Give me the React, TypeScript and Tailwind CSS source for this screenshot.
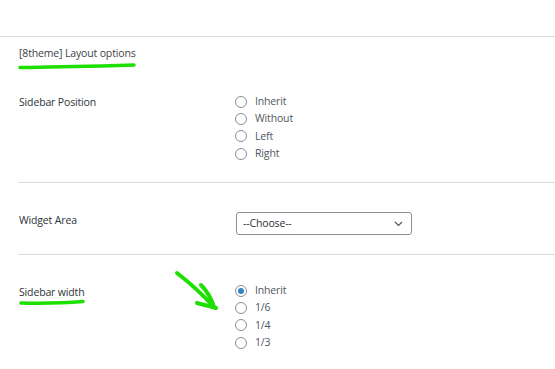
import React from 'react';

const font = { fontFamily: '"Open Sans", "Noto Sans", Arial, sans-serif' };

function Radio({ label, checked = false }: { label: string; checked?: boolean }) {
  return (
    <label className="flex items-center h-[17.33px] gap-[8px]">
      <span className="w-[12px] h-[12px] rounded-full border border-[#8c8f94] bg-white flex items-center justify-center shrink-0">
        {checked && <span className="w-[6px] h-[6px] rounded-full bg-[#3582c4]" />}
      </span>
      <span className="text-[10.5px] tracking-[-0.15px] leading-[17px] text-[#50575e]">{label}</span>
    </label>
  );
}

function RadioGroup({ options, checked }: { options: string[]; checked?: string }) {
  return (
    <div className="flex flex-col">
      {options.map((o) => (
        <Radio key={o} label={o} checked={o === checked} />
      ))}
    </div>
  );
}

export default function App() {
  return (
    <div className="relative w-[555px] h-[369px] bg-white overflow-hidden text-[#1d2327]" style={font}>
      {/* top strip */}
      <div className="h-[37px] border-b border-[#dcdcde]" />

      {/* section heading */}
      <div className="relative pl-[19px] pt-[8px]">
        <h3 className="text-[10.5px] tracking-[-0.15px] leading-[16px] text-[#3c434a] font-normal">[8theme] Layout options</h3>
      </div>

      <div className="ml-[18px]">
        {/* Sidebar position */}
        <div className="flex h-[121px] pt-[32px]">
          <div className="w-[217px] pl-[1px] pt-[1px] text-[10.5px] tracking-[-0.15px] leading-[17px] text-[#2c3338]">Sidebar Position</div>
          <RadioGroup options={['Inherit', 'Without', 'Left', 'Right']} />
        </div>

        {/* Widget area */}
        <div className="flex h-[72px] pt-[29px] border-t border-[#dcdcde]">
          <div className="w-[218px] pl-[1px] text-[10.5px] tracking-[-0.15px] leading-[17px] text-[#2c3338]">Widget Area</div>
          <div className="w-[176px] h-[23px] rounded-[3px] border border-[#8c8f94] flex items-center justify-between pl-[6px] pr-[8px]">
            <span className="text-[10.5px] tracking-[-0.15px] text-[#2c3338]">--Choose--</span>
            <svg width="9" height="6" viewBox="0 0 9 6" fill="none">
              <path d="M1 1l3.5 3.5L8 1" stroke="#50575e" strokeWidth="1.2" />
            </svg>
          </div>
        </div>

        {/* Sidebar width */}
        <div className="flex pt-[27px] border-t border-[#dcdcde]">
          <div className="w-[217px] pl-[1px] pt-[2px] text-[10.5px] tracking-[-0.15px] leading-[17px] text-[#2c3338]">Sidebar width</div>
          <RadioGroup options={['Inherit', '1/6', '1/4', '1/3']} checked="Inherit" />
        </div>
      </div>

      {/* green annotations */}
      <svg className="absolute left-0 top-0 pointer-events-none" width="555" height="369" viewBox="0 0 555 369" fill="none">
        <path d="M20 67.5 C60 67 95 66 134 65" stroke="#1ee000" strokeWidth="3.5" strokeLinecap="round" />
        <path d="M21 303 C45 303.5 65 303 83 301.5" stroke="#1ee000" strokeWidth="3.5" strokeLinecap="round" />
        <path d="M177 273 C190 283 202 294 213 306" stroke="#1ee000" strokeWidth="4" strokeLinecap="round" />
        <path d="M201 285 C206 290 211 298 214 307" stroke="#1ee000" strokeWidth="4" strokeLinecap="round" />
        <path d="M197 303 C204 305 210 306 216 308" stroke="#1ee000" strokeWidth="4" strokeLinecap="round" />
      </svg>
    </div>
  );
}
